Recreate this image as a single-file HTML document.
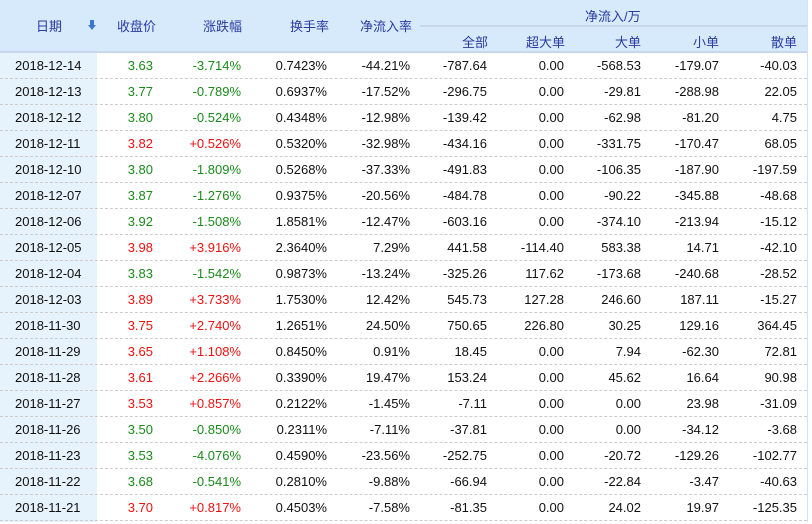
<!DOCTYPE html><html><head><meta charset="utf-8"><style>
body{margin:0;background:#fff;width:812px;height:524px;overflow:hidden;font-family:"Liberation Sans","Noto Sans CJK SC",sans-serif;font-size:13px}
#t{position:absolute;left:0;top:0;width:807px;height:522px;border-right:1px solid #cfe3f5}
.hd{position:absolute;left:0;top:0;width:807px;height:51px;background:#d6eafc;border-bottom:2px solid #c6d8ea}
.h{position:absolute;color:#2a3aa0;font-size:13px;white-space:nowrap}
.r{position:absolute;left:0;width:807px;height:25px;border-bottom:1px dashed #ccc}
.dc{position:absolute;left:0;top:53px;width:97px;height:469px;background:#e6f2fc}
.c{position:absolute;top:5px;text-align:right;white-space:nowrap;color:#111}
.g{color:#1a8a1a}.rd{color:#f01010}
</style></head><body><div id="t">
<div class="hd"></div>
<div style="position:absolute;left:420px;top:25px;width:387px;height:2px;background:#c6d8ea"></div>
<div class="h" style="left:36px;top:16px">日期</div>
<div style="position:absolute;left:88px;top:25px;width:0;height:0;border-left:4px solid transparent;border-right:4px solid transparent;border-top:5px solid #3a78d0"></div>
<div style="position:absolute;left:90px;top:20px;width:4px;height:5px;background:#3a78d0"></div>
<div class="h" style="left:117px;top:16px">收盘价</div>
<div class="h" style="left:203px;top:16px">涨跌幅</div>
<div class="h" style="left:290px;top:16px">换手率</div>
<div class="h" style="left:360px;top:16px">净流入率</div>
<div class="h" style="left:585px;top:6px">净流入/万</div>
<div class="h" style="left:462px;top:32px">全部</div>
<div class="h" style="left:526px;top:32px">超大单</div>
<div class="h" style="left:615px;top:32px">大单</div>
<div class="h" style="left:693px;top:32px">小单</div>
<div class="h" style="left:771px;top:32px">散单</div>
<div class="dc"></div>
<div id="rows"></div>
</div>
<script>
var d=[
["2018-12-14","3.63","-3.714%","0.7423%","-44.21%","-787.64","0.00","-568.53","-179.07","-40.03"],
["2018-12-13","3.77","-0.789%","0.6937%","-17.52%","-296.75","0.00","-29.81","-288.98","22.05"],
["2018-12-12","3.80","-0.524%","0.4348%","-12.98%","-139.42","0.00","-62.98","-81.20","4.75"],
["2018-12-11","3.82","+0.526%","0.5320%","-32.98%","-434.16","0.00","-331.75","-170.47","68.05"],
["2018-12-10","3.80","-1.809%","0.5268%","-37.33%","-491.83","0.00","-106.35","-187.90","-197.59"],
["2018-12-07","3.87","-1.276%","0.9375%","-20.56%","-484.78","0.00","-90.22","-345.88","-48.68"],
["2018-12-06","3.92","-1.508%","1.8581%","-12.47%","-603.16","0.00","-374.10","-213.94","-15.12"],
["2018-12-05","3.98","+3.916%","2.3640%","7.29%","441.58","-114.40","583.38","14.71","-42.10"],
["2018-12-04","3.83","-1.542%","0.9873%","-13.24%","-325.26","117.62","-173.68","-240.68","-28.52"],
["2018-12-03","3.89","+3.733%","1.7530%","12.42%","545.73","127.28","246.60","187.11","-15.27"],
["2018-11-30","3.75","+2.740%","1.2651%","24.50%","750.65","226.80","30.25","129.16","364.45"],
["2018-11-29","3.65","+1.108%","0.8450%","0.91%","18.45","0.00","7.94","-62.30","72.81"],
["2018-11-28","3.61","+2.266%","0.3390%","19.47%","153.24","0.00","45.62","16.64","90.98"],
["2018-11-27","3.53","+0.857%","0.2122%","-1.45%","-7.11","0.00","0.00","23.98","-31.09"],
["2018-11-26","3.50","-0.850%","0.2311%","-7.11%","-37.81","0.00","0.00","-34.12","-3.68"],
["2018-11-23","3.53","-4.076%","0.4590%","-23.56%","-252.75","0.00","-20.72","-129.26","-102.77"],
["2018-11-22","3.68","-0.541%","0.2810%","-9.88%","-66.94","0.00","-22.84","-3.47","-40.63"],
["2018-11-21","3.70","+0.817%","0.4503%","-7.58%","-81.35","0.00","24.02","19.97","-125.35"]];
var R=[153,241,327,410,487,564,641,719,797],h="";
d.forEach(function(r,i){var cl=r[2][0]=="+"?"rd":"g";
h+='<div class="r" style="top:'+(53+i*26)+'px"><div class="c" style="left:15px;text-align:left">'+r[0]+'</div>';
for(var j=1;j<10;j++){var c=(j<3)?cl:"";h+='<div class="c '+c+'" style="right:'+(807-R[j-1])+'px">'+r[j]+'</div>';}
h+='</div>';});
document.getElementById("rows").innerHTML=h;
</script></body></html>
